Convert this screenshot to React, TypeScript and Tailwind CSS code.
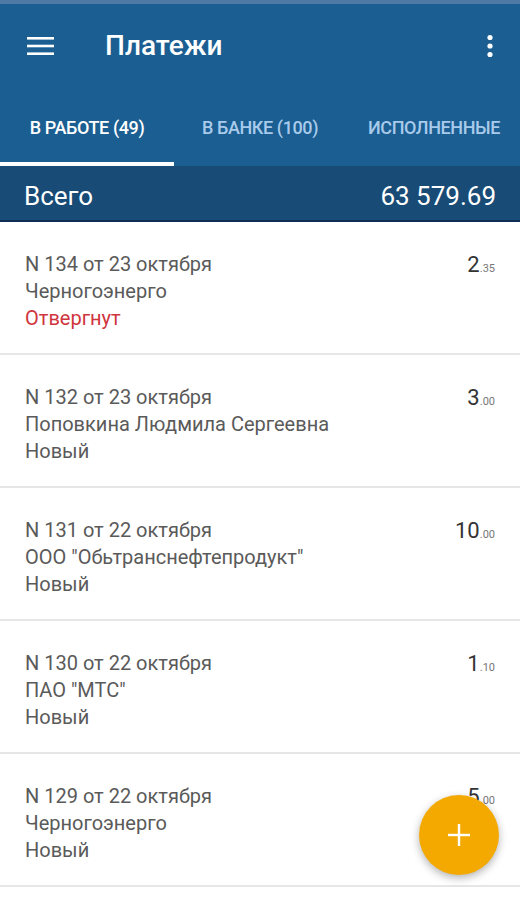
import React from "react";

const rows = [
  { title: "N 134 от 23 октября", name: "Черногоэнерго", status: "Отвергнут", red: true, int: "2", dec: ".35" },
  { title: "N 132 от 23 октября", name: "Поповкина Людмила Сергеевна", status: "Новый", red: false, int: "3", dec: ".00" },
  { title: "N 131 от 22 октября", name: "ООО \"Обьтранснефтепродукт\"", status: "Новый", red: false, int: "10", dec: ".00" },
  { title: "N 130 от 22 октября", name: "ПАО \"МТС\"", status: "Новый", red: false, int: "1", dec: ".10" },
  { title: "N 129 от 22 октября", name: "Черногоэнерго", status: "Новый", red: false, int: "5", dec: ".00" },
];

export default function App() {
  return (
    <div className="relative w-[520px] h-[900px] overflow-hidden bg-white" style={{ fontFamily: "Roboto, 'Noto Sans', sans-serif" }}>
      <div className="h-[4px] bg-[#4f78a4]" />
      <div className="bg-[#1b5e92]">
        <div className="flex items-center h-[84px] pl-[27px] pr-[26px]">
          <svg width="27" height="20" viewBox="0 0 27 20" className="shrink-0">
            <rect x="0" y="1" width="27" height="2.6" fill="#fff" />
            <rect x="0" y="8.7" width="27" height="2.6" fill="#fff" />
            <rect x="0" y="16.4" width="27" height="2.6" fill="#fff" />
          </svg>
          <div className="ml-[51px] text-white text-[28px] font-medium leading-none">Платежи</div>
          <div className="flex-1" />
          <svg width="8" height="24" viewBox="0 0 8 24">
            <circle cx="4" cy="3.5" r="2.6" fill="#fff" />
            <circle cx="4" cy="12" r="2.6" fill="#fff" />
            <circle cx="4" cy="20.5" r="2.6" fill="#fff" />
          </svg>
        </div>
        <div className="flex h-[78px] text-[18px] font-medium tracking-[-0.4px]">
          <div className="relative w-[174px] flex items-center justify-center text-white pt-[1px]">
            В РАБОТЕ (49)
            <div className="absolute left-0 right-0 bottom-0 h-[4px] bg-white" />
          </div>
          <div className="w-[172px] flex items-center justify-center text-[#a9cbeb] pt-[1px]">В БАНКЕ (100)</div>
          <div className="flex-1 flex items-center justify-end pr-[20px] text-[#a9cbeb] pt-[1px]">ИСПОЛНЕННЫЕ</div>
        </div>
      </div>
      <div className="flex items-center justify-between h-[56px] pt-[5px] px-[24px] bg-[#184b76] text-white text-[26px] border-b-2 border-[#0e2e55]">
        <span className="leading-none">Всего</span>
        <span className="leading-none">63 579.69</span>
      </div>
      <div>
        {rows.map((r, i) => (
          <div key={i} className="flex h-[133px] pt-[29px] px-[25px] border-b-2 border-[#e6e6e6] text-[20px] leading-[27px]">
            <div className="flex-1 text-[#5a5a5a]">
              <div>{r.title}</div>
              <div>{r.name}</div>
              <div className={r.red ? "text-[#d0343d]" : ""}>{r.status}</div>
            </div>
            <div className="text-[#333333]">
              <span className="text-[22px]">{r.int}</span>
              <span className="text-[11px] text-[#777777]">{r.dec}</span>
            </div>
          </div>
        ))}
      </div>
      <div className="absolute left-[419px] top-[795px] w-[80px] h-[80px] rounded-full bg-[#f3a900] shadow-[0_3px_8px_rgba(0,0,0,0.3)] flex items-center justify-center">
        <svg width="22" height="22" viewBox="0 0 22 22">
          <rect x="9.8" y="0" width="2.4" height="22" fill="#fff" />
          <rect x="0" y="9.8" width="22" height="2.4" fill="#fff" />
        </svg>
      </div>
    </div>
  );
}
